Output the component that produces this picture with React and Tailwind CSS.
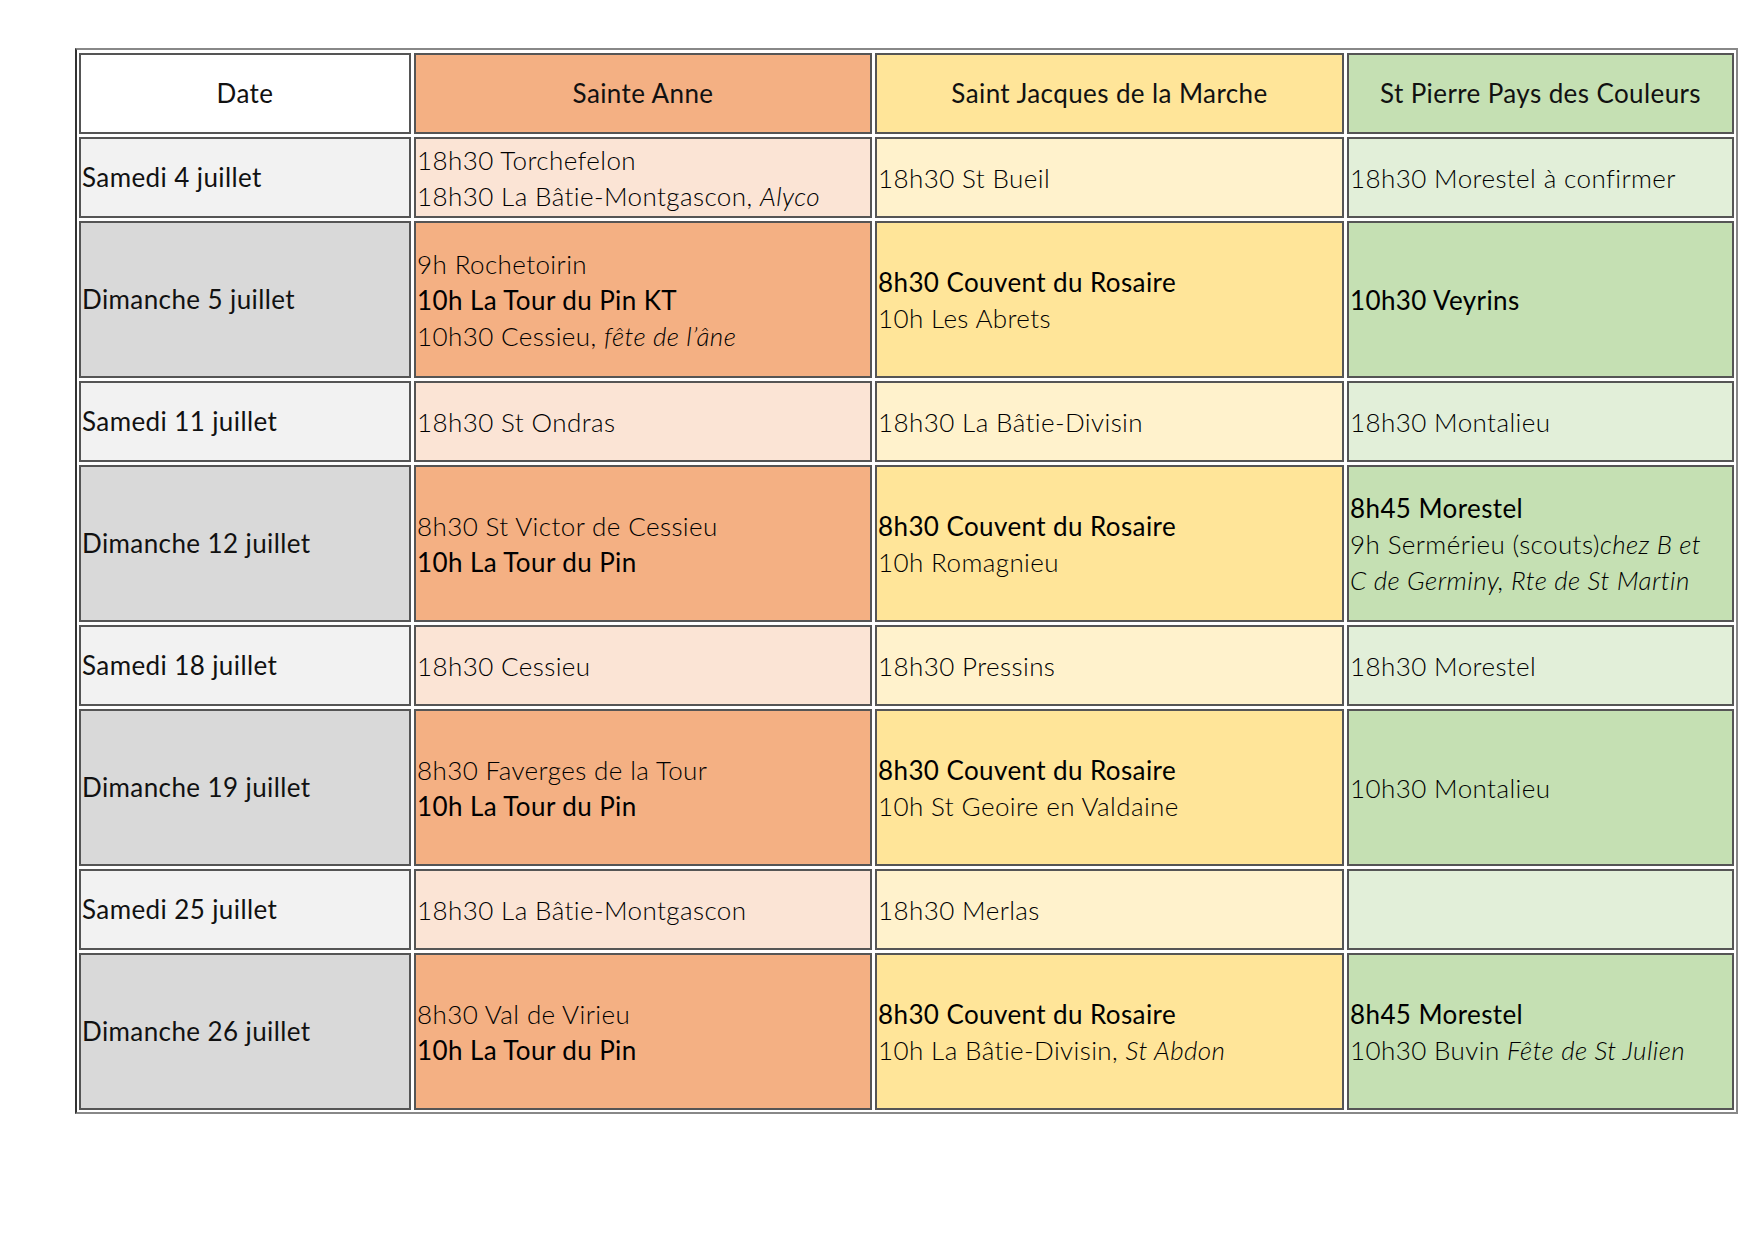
import React from 'react';

// each line is a list of segments: [text, style] where style is 'b' (bold), 'i' (italic) or ''
const rows = [
  {
    date: 'Samedi 4 juillet',
    tall: false,
    cells: [
      [[['18h30 Torchefelon', '']], [['18h30 La Bâtie-Montgascon, ', ''], ['Alyco', 'i']]],
      [[['18h30 St Bueil', '']]],
      [[['18h30 Morestel à confirmer', '']]],
    ],
  },
  {
    date: 'Dimanche 5 juillet',
    tall: true,
    cells: [
      [
        [['9h Rochetoirin', '']],
        [['10h La Tour du Pin KT', 'b']],
        [['10h30 Cessieu, ', ''], ['fête de l’âne', 'i']],
      ],
      [[['8h30 Couvent du Rosaire', 'b']], [['10h Les Abrets', '']]],
      [[['10h30 Veyrins', 'b']]],
    ],
  },
  {
    date: 'Samedi 11 juillet',
    tall: false,
    cells: [
      [[['18h30 St Ondras', '']]],
      [[['18h30 La Bâtie-Divisin', '']]],
      [[['18h30 Montalieu', '']]],
    ],
  },
  {
    date: 'Dimanche 12 juillet',
    tall: true,
    cells: [
      [[['8h30 St Victor de Cessieu', '']], [['10h La Tour du Pin', 'b']]],
      [[['8h30 Couvent du Rosaire', 'b']], [['10h Romagnieu', '']]],
      [
        [['8h45 Morestel', 'b']],
        [['9h Sermérieu (scouts)', ''], ['chez B et', 'i']],
        [['C de Germiny, Rte de St Martin', 'i']],
      ],
    ],
  },
  {
    date: 'Samedi 18 juillet',
    tall: false,
    cells: [
      [[['18h30 Cessieu', '']]],
      [[['18h30 Pressins', '']]],
      [[['18h30 Morestel', '']]],
    ],
  },
  {
    date: 'Dimanche 19 juillet',
    tall: true,
    cells: [
      [[['8h30 Faverges de la Tour', '']], [['10h La Tour du Pin', 'b']]],
      [[['8h30 Couvent du Rosaire', 'b']], [['10h St Geoire en Valdaine', '']]],
      [[['10h30 Montalieu', '']]],
    ],
  },
  {
    date: 'Samedi 25 juillet',
    tall: false,
    cells: [
      [[['18h30 La Bâtie-Montgascon', '']]],
      [[['18h30 Merlas', '']]],
      [],
    ],
  },
  {
    date: 'Dimanche 26 juillet',
    tall: true,
    cells: [
      [[['8h30 Val de Virieu', '']], [['10h La Tour du Pin', 'b']]],
      [[['8h30 Couvent du Rosaire', 'b']], [['10h La Bâtie-Divisin, ', ''], ['St Abdon', 'i']]],
      [[['8h45 Morestel', 'b']], [['10h30 Buvin ', ''], ['Fête de St Julien', 'i']]],
    ],
  },
];

const lightBg = ['bg-[#fbe4d5]', 'bg-[#fff2cc]', 'bg-[#e2efd9]'];
const darkBg = ['bg-[#f4b083]', 'bg-[#ffe599]', 'bg-[#c5e0b3]'];

function Seg({ text, kind }) {
  if (kind === 'b') return <span className="font-normal">{text}</span>;
  if (kind === 'i') return <span className="italic">{text}</span>;
  return <span>{text}</span>;
}

function Cell({ lines, bg }) {
  return (
    <div className={`${bg} border-2 border-[#555] flex flex-col justify-center pl-[1px] font-light text-black`}>
      {lines.map((line, i) => (
        <div key={i} className="leading-[36px] whitespace-nowrap">
          {line.map(([text, kind], j) => (
            <Seg key={j} text={text} kind={kind} />
          ))}
        </div>
      ))}
    </div>
  );
}

export default function App() {
  return (
    <div className="w-[1755px] h-[1241px] bg-white pt-[48px] pl-[75px] font-['Lato','Liberation_Sans',sans-serif] text-[26px] tracking-[0.4px] text-[#111]">
      <div className="inline-block border-2 border-[#888] border-l-[#333] p-[2px] pt-[3px]">
        <div className="grid grid-cols-[332px_458px_469px_387px] gap-[3px]">
          {/* header */}
          <div className="h-[81px] bg-white border-2 border-[#555] flex items-center justify-center">Date</div>
          <div className="h-[81px] bg-[#f4b083] border-2 border-[#555] flex items-center justify-center">Sainte Anne</div>
          <div className="h-[81px] bg-[#ffe599] border-2 border-[#555] flex items-center justify-center">Saint Jacques de la Marche</div>
          <div className="h-[81px] bg-[#c5e0b3] border-2 border-[#555] flex items-center justify-center">St Pierre Pays des Couleurs</div>

          {rows.map((row) => (
            <React.Fragment key={row.date}>
              <div
                className={`${row.tall ? 'h-[157px] bg-[#d9d9d9]' : 'h-[81px] bg-[#f2f2f2]'} border-2 border-[#555] flex items-center pl-[1px]`}
              >
                {row.date}
              </div>
              {row.cells.map((lines, c) => (
                <Cell key={c} lines={lines} bg={row.tall ? darkBg[c] : lightBg[c]} />
              ))}
            </React.Fragment>
          ))}
        </div>
      </div>
    </div>
  );
}
